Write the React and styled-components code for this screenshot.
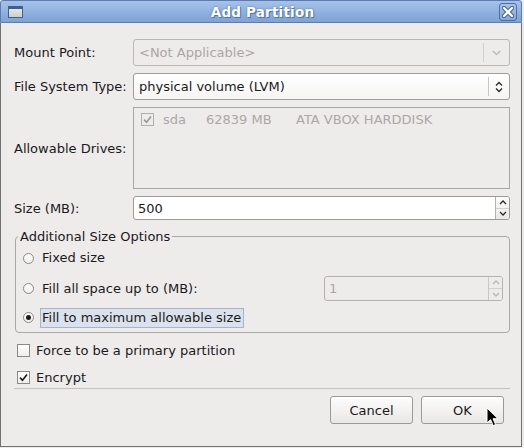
import React from 'react';
import styled, { createGlobalStyle } from 'styled-components';

const Global = createGlobalStyle`
  html, body { margin: 0; padding: 0; background: #edeceb; }
  body { font-family: "DejaVu Sans", "Liberation Sans", sans-serif; font-size: 13px; color: #1a1a1a; }
  * { box-sizing: border-box; }
`;

const Window = styled.div`
  position: relative;
  width: 522px;
  height: 447px;
  display: flex;
  flex-direction: column;
  background: #edeceb;
`;

const TitleBar = styled.div`
  height: 23px;
  display: grid;
  grid-template-columns: 1fr auto 1fr;
  align-items: center;
  padding: 0 4px 0 7px;
  background: linear-gradient(#a6c2e9, #7ea2d6);
  border: 1px solid #5a7cb0;
  border-radius: 3px 3px 0 0;
`;

const TitleText = styled.div`
  font-weight: bold;
  font-size: 13.5px;
  color: #fff;
  text-shadow: 0 0 2px #4b6da0, 1px 1px 0 #5678ab;
  letter-spacing: 0.2px;
`;

const WinIcon = styled.div`
  width: 15px;
  height: 12px;
  border: 1px solid #3e5f93;
  border-top-width: 3px;
  background: linear-gradient(#e6e6e2, #cfcfca);
  justify-self: start;
`;

const CloseBtn = styled.div`
  justify-self: end;
  width: 18px;
  height: 18px;
  border: 1px solid #4d6e9f;
  border-radius: 3px;
  background: linear-gradient(#a9c4ea, #86a8d9);
  display: flex;
  align-items: center;
  justify-content: center;
`;

const Body = styled.div`
  flex: 1;
  display: flex;
  flex-direction: column;
  border: 1px solid #727272;
  border-top: none;
  padding: 16px 11px 0 13px;
`;

const Form = styled.div`
  display: grid;
  grid-template-columns: 119px 1fr;
  grid-template-rows: 27px 27px 82px 24px;
  row-gap: 7px;
`;

const Label = styled.div`
  align-self: center;
`;

const Combo = styled.div`
  display: flex;
  align-items: stretch;
  border: 1px solid ${p => (p.$disabled ? '#bab8b5' : '#9f9d9a')};
  border-radius: 3px;
  background: ${p => (p.$disabled ? '#edeceb' : 'linear-gradient(#ffffff, #f6f5f4)')};
  color: ${p => (p.$disabled ? '#a9a7a4' : '#1a1a1a')};
`;

const ComboText = styled.div`
  flex: 1;
  display: flex;
  align-items: center;
  padding-left: 5px;
`;

const ComboArrow = styled.div`
  width: ${p => p.$w}px;
  display: flex;
  align-items: center;
  justify-content: center;
  border-left: 1px solid ${p => (p.$disabled ? '#d2d0cd' : '#c8c6c3')};
  margin: 3px 0;
`;

const DrivesBox = styled.div`
  border: 1px solid #a9a7a4;
  background: #edeceb;
  padding: 4px 7px;
`;

const DriveRow = styled.div`
  display: flex;
  align-items: center;
  color: #aaa8a5;
  height: 14px;
`;

const DriveCell = styled.span`
  display: inline-block;
  width: ${p => (p.$w ? `${p.$w}px` : 'auto')};
`;

const Entry = styled.div`
  display: flex;
  align-items: stretch;
  border: 1px solid ${p => (p.$disabled ? '#b5b3b0' : '#9c9a97')};
  border-radius: 3px;
  background: ${p => (p.$disabled ? '#edeceb' : '#ffffff')};
  color: ${p => (p.$disabled ? '#a9a7a4' : '#1a1a1a')};
  width: ${p => (p.$w ? `${p.$w}px` : 'auto')};
  height: ${p => (p.$h ? `${p.$h}px` : 'auto')};
  margin-left: ${p => (p.$right ? 'auto' : '0')};
`;

const EntryText = styled.div`
  flex: 1;
  display: flex;
  align-items: center;
  padding-left: 4px;
`;

const Spin = styled.div`
  width: 14px;
  display: flex;
  flex-direction: column;
  border-left: 1px solid ${p => (p.$disabled ? '#c9c7c4' : '#b2b0ad')};
  background: ${p => (p.$disabled ? '#edeceb' : 'linear-gradient(#fbfbfa, #ebe9e7)')};
  border-radius: 0 2px 2px 0;
`;

const SpinHalf = styled.div`
  flex: 1;
  display: flex;
  align-items: center;
  justify-content: center;
  & + & { border-top: 1px solid ${p => (p.$disabled ? '#d3d1ce' : '#c2c0bd')}; }
`;

const Frame = styled.div`
  position: relative;
  margin: 16px 0 0 1px;
  border: 1px solid #aaa8a5;
  border-radius: 4px;
  padding: 10px 6px 4px 7px;
  display: flex;
  flex-direction: column;
`;

const FrameTitle = styled.div`
  position: absolute;
  top: -9px;
  left: 2px;
  padding: 0 2px;
  line-height: 17px;
  background: #edeceb;
`;

const RadioRow = styled.div`
  display: flex;
  align-items: center;
  height: ${p => p.$h}px;
  margin-top: ${p => p.$mt || 0}px;
`;

const RadioCircle = styled.span`
  width: 11px;
  height: 11px;
  border-radius: 50%;
  border: 1px solid #8b8986;
  background: linear-gradient(#ffffff, #eeedec);
  display: flex;
  align-items: center;
  justify-content: center;
  flex: none;
  &::after {
    content: '';
    width: 5px;
    height: 5px;
    border-radius: 50%;
    background: ${p => (p.$checked ? '#1a1a1a' : 'transparent')};
  }
`;

const RadioLabel = styled.span`
  margin-left: 6px;
  padding: 0 2px 1px 1px;
  border: 1px solid ${p => (p.$focus ? '#a3b5cf' : 'transparent')};
  background: ${p => (p.$focus ? '#dbe2eb' : 'transparent')};
  line-height: 17px;
`;

const CheckRow = styled.div`
  display: flex;
  align-items: center;
  height: 18px;
  margin-top: ${p => p.$mt}px;
  padding-left: 3px;
`;

const CheckBox = styled.span`
  width: 13px;
  height: 13px;
  border: 1px solid ${p => (p.$disabled ? '#b1afac' : '#8b8986')};
  background: ${p => (p.$disabled ? '#edeceb' : 'linear-gradient(#ffffff, #efeeed)')};
  display: flex;
  align-items: center;
  justify-content: center;
  flex: none;
  margin-right: ${p => p.$gap}px;
`;

const Separator = styled.div`
  height: 1px;
  background: #c3c1be;
  margin-top: 2px;
`;

const ButtonRow = styled.div`
  display: flex;
  justify-content: flex-end;
  gap: 8px;
  margin: 7px 6px 0 0;
`;

const Button = styled.div`
  width: 83px;
  height: 28px;
  border: 1px solid #9c9a97;
  border-radius: 3px;
  background: linear-gradient(#fdfdfd, #e9e7e5);
  display: flex;
  align-items: center;
  justify-content: center;
  box-shadow: inset 0 1px 0 #ffffff;
`;

const Cursor = styled.svg`
  position: absolute;
  left: 486px;
  top: 407px;
`;

const Check = ({ color }) => (
  <svg width="9" height="9" viewBox="0 0 9 9">
    <path d="M1 4.6 L3.5 7.2 L8 1.5" fill="none" stroke={color} strokeWidth="1.6" />
  </svg>
);

const ChevDown = ({ color }) => (
  <svg width="9" height="6" viewBox="0 0 9 6">
    <path d="M0.8 1 L4.5 4.6 L8.2 1" fill="none" stroke={color} strokeWidth="1.1" />
  </svg>
);

const UpDown = () => (
  <svg width="8" height="12" viewBox="0 0 8 12">
    <path d="M1 4.5 L4 1.5 L7 4.5 M1 7.5 L4 10.5 L7 7.5" fill="none" stroke="#2a2a2a" strokeWidth="1.3" />
  </svg>
);

const SmallArrow = ({ up, color }) => (
  <svg width="8" height="5" viewBox="0 0 8 5">
    <path d={up ? 'M1 4 L4 1 L7 4' : 'M1 1 L4 4 L7 1'} fill="none" stroke={color} strokeWidth="1.3" />
  </svg>
);

const SpinBox = ({ disabled }) => {
  const c = disabled ? '#b9b7b4' : '#2a2a2a';
  return (
    <Spin $disabled={disabled}>
      <SpinHalf $disabled={disabled}><SmallArrow up color={c} /></SpinHalf>
      <SpinHalf $disabled={disabled}><SmallArrow color={c} /></SpinHalf>
    </Spin>
  );
};

export default function App() {
  return (
    <>
      <Global />
      <Window>
        <TitleBar>
          <WinIcon />
          <TitleText>Add Partition</TitleText>
          <CloseBtn>
            <svg width="12" height="12" viewBox="0 0 12 12">
              <path d="M2 2 L10 10 M10 2 L2 10" stroke="#3f5f90" strokeWidth="4.4" strokeLinecap="round" />
              <path d="M2 2 L10 10 M10 2 L2 10" stroke="#ffffff" strokeWidth="2.4" strokeLinecap="round" />
            </svg>
          </CloseBtn>
        </TitleBar>
        <Body>
          <Form>
            <Label>Mount Point:</Label>
            <Combo $disabled>
              <ComboText>&lt;Not Applicable&gt;</ComboText>
              <ComboArrow $w={26} $disabled><ChevDown color="#b1afac" /></ComboArrow>
            </Combo>
            <Label>File System Type:</Label>
            <Combo>
              <ComboText>physical volume (LVM)</ComboText>
              <ComboArrow $w={21}><UpDown /></ComboArrow>
            </Combo>
            <Label>Allowable Drives:</Label>
            <DrivesBox>
              <DriveRow>
                <CheckBox $disabled $gap={9}><Check color="#9a9895" /></CheckBox>
                <DriveCell $w={43}>sda</DriveCell>
                <DriveCell $w={90}>62839 MB</DriveCell>
                <DriveCell>ATA VBOX HARDDISK</DriveCell>
              </DriveRow>
            </DrivesBox>
            <Label>Size (MB):</Label>
            <Entry>
              <EntryText>500</EntryText>
              <SpinBox />
            </Entry>
          </Form>

          <Frame>
            <FrameTitle>Additional Size Options</FrameTitle>
            <RadioRow $h={22}>
              <RadioCircle />
              <RadioLabel>Fixed size</RadioLabel>
            </RadioRow>
            <RadioRow $h={25} $mt={7}>
              <RadioCircle />
              <RadioLabel>Fill all space up to (MB):</RadioLabel>
              <Entry $disabled $right $w={179} $h={25}>
                <EntryText>1</EntryText>
                <SpinBox disabled />
              </Entry>
            </RadioRow>
            <RadioRow $h={21} $mt={6}>
              <RadioCircle $checked />
              <RadioLabel $focus>Fill to maximum allowable size</RadioLabel>
            </RadioRow>
          </Frame>

          <CheckRow $mt={8}>
            <CheckBox $gap={6} />
            Force to be a primary partition
          </CheckRow>
          <CheckRow $mt={9}>
            <CheckBox $gap={6}><Check color="#1a1a1a" /></CheckBox>
            Encrypt
          </CheckRow>
          <Separator />
          <ButtonRow>
            <Button>Cancel</Button>
            <Button>OK</Button>
          </ButtonRow>
        </Body>
        <Cursor width="13" height="20" viewBox="0 0 13 20">
          <path d="M1 1 L1 16 L4.6 12.6 L7.2 18.6 L9.6 17.6 L7 11.7 L12 11.7 Z" fill="#000" stroke="#fff" strokeWidth="1" strokeLinejoin="round" />
        </Cursor>
      </Window>
    </>
  );
}
